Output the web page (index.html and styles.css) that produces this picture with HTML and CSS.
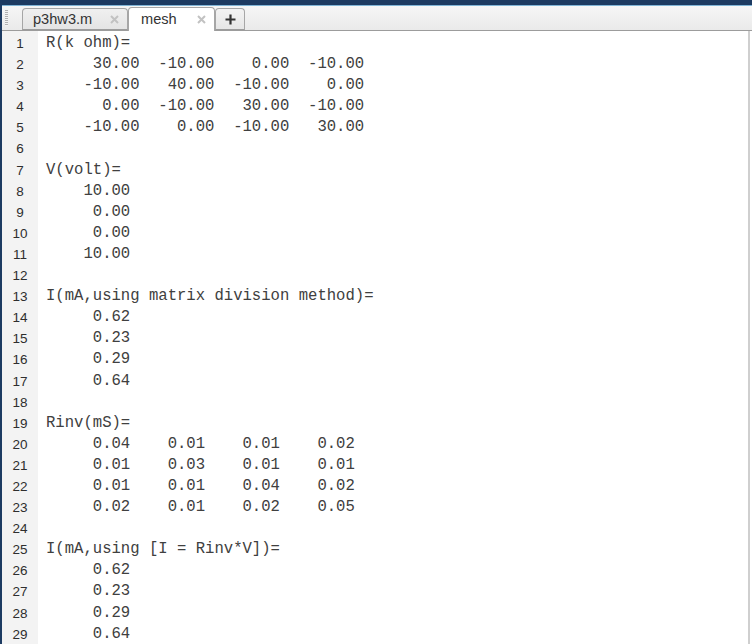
FILE: index.html
```html
<!DOCTYPE html>
<html>
<head>
<meta charset="utf-8">
<link rel="stylesheet" href="styles.css">
</head>
<body>
<div class="window">
  <div class="topstrip"></div>
  <div class="tabbar">
    <div class="gripper"></div>
    <div class="tab inactive">
      <span class="tab-label">p3hw3.m</span>
      <svg class="close" width="9" height="9" viewBox="0 0 9 9"><path d="M1 1L8 8M8 1L1 8" stroke="#c2c2c2" stroke-width="2" fill="none"/></svg>
    </div>
    <div class="tab active">
      <span class="tab-label">mesh</span>
      <svg class="close" width="9" height="9" viewBox="0 0 9 9"><path d="M1 1L8 8M8 1L1 8" stroke="#c2c2c2" stroke-width="2" fill="none"/></svg>
    </div>
    <div class="tab plus">
      <svg width="11" height="11" viewBox="0 0 11 11"><path d="M5.5 0.5V10.5M0.5 5.5H10.5" stroke="#333" stroke-width="2.2" fill="none"/></svg>
    </div>
  </div>
  <div class="editor">
    <div class="gutter">
      <div>1</div><div>2</div><div>3</div><div>4</div><div>5</div><div>6</div><div>7</div><div>8</div><div>9</div><div>10</div><div>11</div><div>12</div><div>13</div><div>14</div><div>15</div><div>16</div><div>17</div><div>18</div><div>19</div><div>20</div><div>21</div><div>22</div><div>23</div><div>24</div><div>25</div><div>26</div><div>27</div><div>28</div><div>29</div>
    </div>
<pre class="code">R(k ohm)=
     30.00  -10.00    0.00  -10.00
    -10.00   40.00  -10.00    0.00
      0.00  -10.00   30.00  -10.00
    -10.00    0.00  -10.00   30.00

V(volt)=
    10.00
     0.00
     0.00
    10.00

I(mA,using matrix division method)=
     0.62
     0.23
     0.29
     0.64

Rinv(mS)=
     0.04    0.01    0.01    0.02
     0.01    0.03    0.01    0.01
     0.01    0.01    0.04    0.02
     0.02    0.01    0.02    0.05

I(mA,using [I = Rinv*V])=
     0.62
     0.23
     0.29
     0.64</pre>
  </div>
</div>
</body>
</html>
```
FILE: styles.css
```css
html, body {
  margin: 0;
  padding: 0;
  background: #ffffff;
}
.window {
  width: 752px;
  height: 644px;
  box-sizing: border-box;
  border-left: 2px solid #1d3b62;
  overflow: hidden;
  display: flex;
  flex-direction: column;
}
.topstrip {
  height: 5px;
  flex: none;
  background: #1c3a61;
  border-bottom: 1px solid #7fb4d6;
}
.tabbar {
  height: 25px;
  flex: none;
  box-sizing: border-box;
  background: linear-gradient(#f6f6f6, #eaeaea);
  border-bottom: 1px solid #9c9c9c;
  display: flex;
  align-items: flex-end;
  padding-left: 3px;
}
.gripper {
  width: 3px;
  height: 16px;
  margin-bottom: 4px;
  margin-right: 14px;
  background: repeating-linear-gradient(#b0b0b0 0 1px, #f4f4f4 1px 2px);
}
.tab {
  box-sizing: border-box;
  border: 1px solid #a6a6a6;
  border-radius: 4px 4px 0 0;
  display: flex;
  align-items: center;
  font-family: "Liberation Sans", Arial, sans-serif;
  font-size: 14.6px;
  color: #333333;
}
.tab.inactive {
  width: 106px;
  height: 22px;
  padding-left: 10px;
  background: linear-gradient(#f0f0f0, #e4e4e4);
  border-bottom-color: #9c9c9c;
}
.tab.active {
  width: 87px;
  height: 24px;
  margin-bottom: -1px;
  padding-left: 12px;
  padding-bottom: 1px;
  background: #ffffff;
  border-bottom: none;
}
.tab.plus {
  width: 30px;
  height: 22px;
  justify-content: center;
  background: linear-gradient(#f3f3f3, #e6e6e6);
  border-bottom-color: #9c9c9c;
}
.tab-label {
  flex: 1;
}
.close {
  margin-right: 8px;
}
.editor {
  flex: 1;
  display: flex;
  border-right: 2px solid #cfcfcf;
  margin-right: 2px;
}
.gutter {
  width: 36px;
  flex: none;
  box-sizing: border-box;
  padding-top: 2px;
  background: #f3f3f3;
  font-family: "Liberation Sans", Arial, sans-serif;
  font-size: 13.5px;
  line-height: 21.1px;
  color: #2e2e2e;
  text-align: center;
}
.code {
  margin: 0;
  padding-top: 2px;
  padding-left: 8px;
  font-family: "Liberation Mono", "Courier New", monospace;
  font-size: 15.6px;
  line-height: 21.1px;
  color: #404040;
}
```
